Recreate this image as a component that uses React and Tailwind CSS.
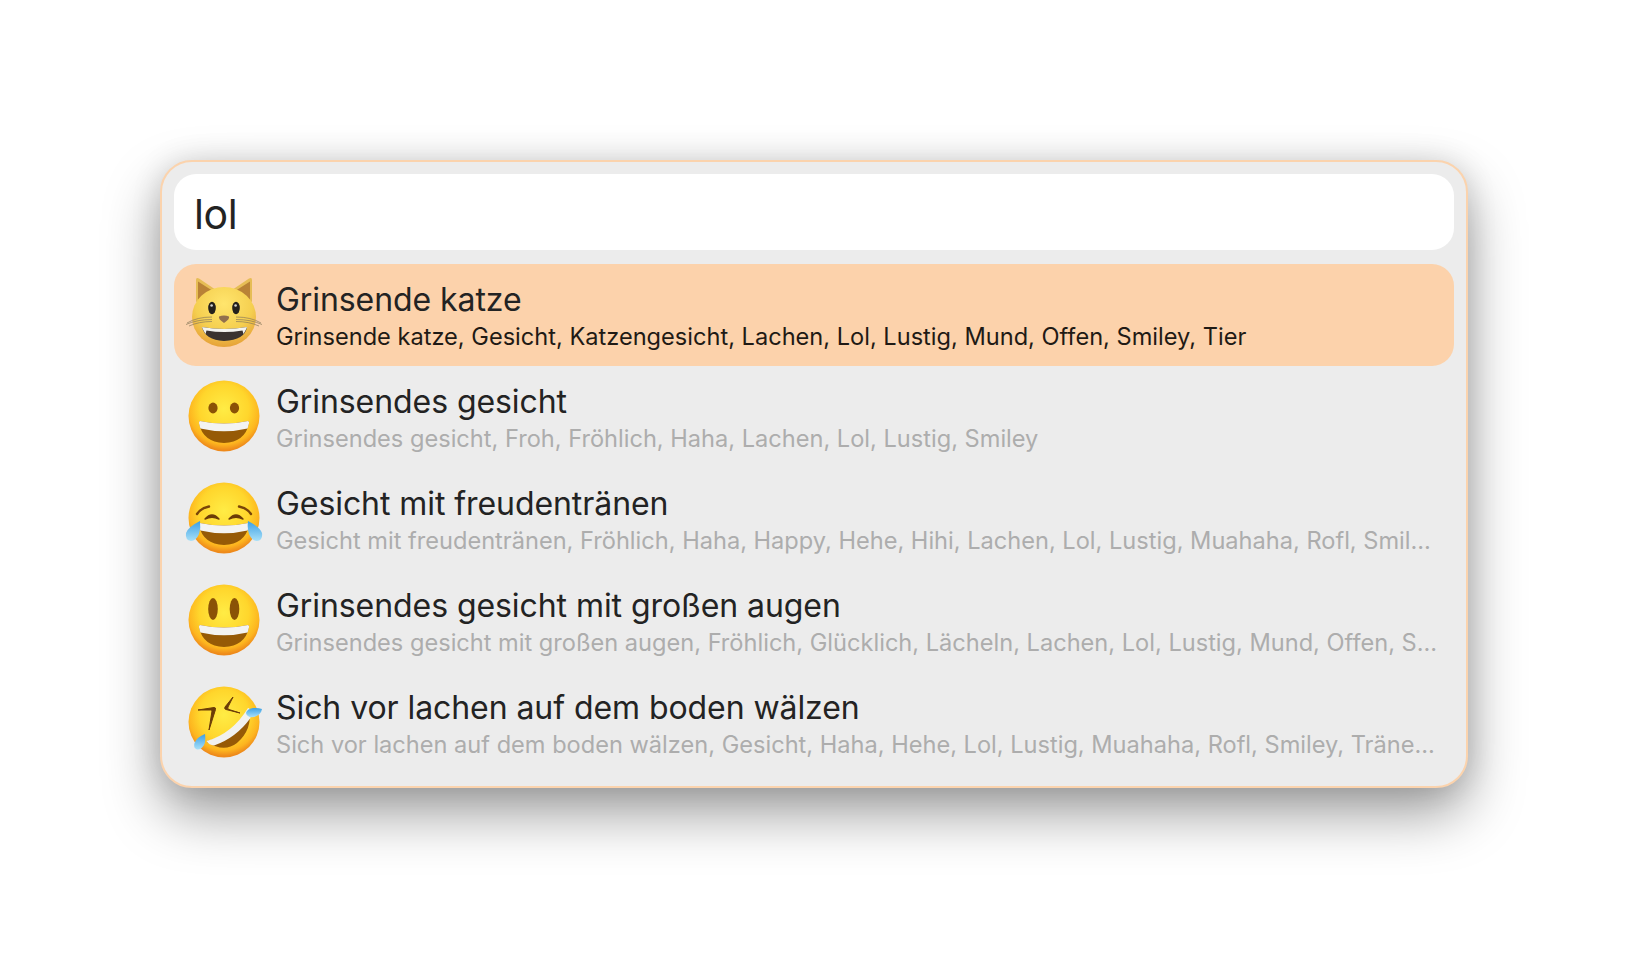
const rows = [
  { icon: "cat", title: "Grinsende katze", sub: "Grinsende katze, Gesicht, Katzengesicht, Lachen, Lol, Lustig, Mund, Offen, Smiley, Tier", active: true },
  { icon: "grin", title: "Grinsendes gesicht", sub: "Grinsendes gesicht, Froh, Fröhlich, Haha, Lachen, Lol, Lustig, Smiley" },
  { icon: "joy", title: "Gesicht mit freudentränen", sub: "Gesicht mit freudentränen, Fröhlich, Haha, Happy, Hehe, Hihi, Lachen, Lol, Lustig, Muahaha, Rofl, Smil..." },
  { icon: "smiley", title: "Grinsendes gesicht mit großen augen", sub: "Grinsendes gesicht mit großen augen, Fröhlich, Glücklich, Lächeln, Lachen, Lol, Lustig, Mund, Offen, S..." },
  { icon: "rofl", title: "Sich vor lachen auf dem boden wälzen", sub: "Sich vor lachen auf dem boden wälzen, Gesicht, Haha, Hehe, Lol, Lustig, Muahaha, Rofl, Smiley, Träne..." },
];

function Defs({ id }) {
  return (
    <defs>
      <radialGradient id={`${id}-face`} cx="50%" cy="40%" r="58%">
        <stop offset="0%" stopColor="#ffec45" />
        <stop offset="60%" stopColor="#ffd62c" />
        <stop offset="86%" stopColor="#fdb51f" />
        <stop offset="100%" stopColor="#ee8a1b" />
      </radialGradient>
      <radialGradient id={`${id}-cat`} cx="50%" cy="28%" r="72%">
        <stop offset="0%" stopColor="#ffe56d" />
        <stop offset="62%" stopColor="#f5cf50" />
        <stop offset="100%" stopColor="#e6a238" />
      </radialGradient>
      <linearGradient id={`${id}-tear`} x1="0" y1="0" x2="0" y2="1">
        <stop offset="0%" stopColor="#3b9fe4" />
        <stop offset="100%" stopColor="#a8e0f8" />
      </linearGradient>
    </defs>
  );
}

function Mouth() {
  // open smile with the white teeth strip on top
  return (
    <g>
      <path d="M16 45 Q40 50 64 45 Q65.5 45 65 47.5 Q61 66 40 67 Q19 66 15 47.5 Q14.5 45 16 45Z" fill="#965a06" />
      <path d="M16 45 Q40 50 64 45 Q65.5 45 65 47.5 L63.6 52.5 Q40 58 16.4 52.5 L15 47.5 Q14.5 45 16 45Z" fill="#f3f3f1" />
    </g>
  );
}

function Emoji({ name }) {
  const cls = "overflow-visible shrink-0 mb-[2px]";
  if (name === "cat") {
    return (
      <svg width="80" height="80" viewBox="0 0 80 80" className={cls}>
        <Defs id="cat" />
        <path d="M12 28 L12 6 Q12 3 15 4.5 L35 18Z" fill="#e6bd55" />
        <path d="M68 28 L68 6 Q68 3 65 4.5 L45 18Z" fill="#e6bd55" />
        <path d="M14 26 L14 7.5 L32 19Z" fill="#b98236" />
        <path d="M66 26 L66 7.5 L48 19Z" fill="#b98236" />
        <ellipse cx="40" cy="43" rx="32" ry="30" fill="url(#cat-cat)" />
        <ellipse cx="28" cy="34" rx="3.8" ry="6.2" fill="#24201c" />
        <ellipse cx="52" cy="34" rx="3.8" ry="6.2" fill="#24201c" />
        <circle cx="27.6" cy="31.5" r="1.3" fill="#fff" opacity=".8" />
        <circle cx="51.6" cy="31.5" r="1.3" fill="#fff" opacity=".8" />
        <path d="M35 42.5 Q40 40.5 45 42.5 Q46 45 40 49 Q34 45 35 42.5Z" fill="#92704d" />
        <g stroke="#8a7a5a" strokeWidth=".7" fill="none">
          <path d="M28 43 Q13 43 3 49" />
          <path d="M28 45.5 Q13 45.5 2 50.5" />
          <path d="M28 47.5 Q15 47.5 5 52" />
          <path d="M52 43 Q67 43 77 49" />
          <path d="M52 45.5 Q67 45.5 78 50.5" />
          <path d="M52 47.5 Q65 47.5 75 52" />
        </g>
        <path d="M18 53 Q40 57 63 53 Q61 66 40 67 Q21 66 18 53Z" fill="#3a3330" />
        <path d="M18 53 Q40 57 63 53 L62 55.5 L59.5 60 L58.5 56.5 Q40 59.5 22.5 56.5 L21.5 60 L19 55.5Z" fill="#f4f4f0" />
      </svg>
    );
  }
  if (name === "rofl") {
    return (
      <svg width="80" height="80" viewBox="0 0 80 80" className={cls}>
        <Defs id="rofl" />
        <circle cx="40" cy="40" r="35.5" fill="url(#rofl-face)" />
        <path d="M65 27 Q69 47 53 61 Q40 71 23 60 Q24 58 27 58 Q50 52 65 27Z" fill="#965a06" />
        <path d="M64 26 Q66 26 66 30 L66.5 36 Q52 56 30 63.5 Q25 63 22.5 59 Q48 52 64 26Z" fill="#f1f1ef" />
        <path d="M49 15 L41 25 Q40 27 42 27.5 L56 31 L45 27.5 Q43 26.5 44 25Z" fill="#6b3c07" stroke="#6b3c07" strokeWidth="1" strokeLinejoin="round" />
        <path d="M14 28 L30 25.5 Q32 25.5 31.5 27.5 L25 48 L28 29 Q28 28 26.5 28Z" fill="#6b3c07" stroke="#6b3c07" strokeWidth="1" strokeLinejoin="round" />
        <path d="M78 27 Q77 33 70 35 Q63 36 62 31 Q63 27 69 26 Q74 25.5 78 27Z" fill="url(#rofl-tear)" />
        <path d="M21 52 Q22 59 20 63 Q17 68 13 67.5 Q9 66 10.5 61 Q13 55 21 52Z" fill="url(#rofl-tear)" />
      </svg>
    );
  }
  return (
    <svg width="80" height="80" viewBox="0 0 80 80" className={cls}>
      <Defs id={name} />
      <circle cx="40" cy="40" r="35.5" fill={`url(#${name}-face)`} />
      {name === "grin" && (
        <>
          <ellipse cx="29" cy="32" rx="4.6" ry="5.4" fill="#8a5206" />
          <ellipse cx="50.5" cy="32" rx="4.6" ry="5.4" fill="#8a5206" />
          <Mouth />
        </>
      )}
      {name === "smiley" && (
        <>
          <ellipse cx="29" cy="29" rx="4.8" ry="11" fill="#8a5206" />
          <ellipse cx="50.5" cy="29" rx="4.8" ry="11" fill="#8a5206" />
          <Mouth />
        </>
      )}
      {name === "joy" && (
        <>
          <path d="M13 36 Q17 30 25 28.5" stroke="#7a4508" strokeWidth="2.4" fill="none" strokeLinecap="round" />
          <path d="M67 36 Q63 30 55 28.5" stroke="#7a4508" strokeWidth="2.4" fill="none" strokeLinecap="round" />
          <path d="M21 41 Q28 33 35 41 Q28 37.5 21 41Z" fill="#6b3c07" stroke="#6b3c07" strokeWidth="1.4" strokeLinejoin="round" />
          <path d="M45 41 Q52 33 59 41 Q52 37.5 45 41Z" fill="#6b3c07" stroke="#6b3c07" strokeWidth="1.4" strokeLinejoin="round" />
          <Mouth />
          <path d="M16 43 Q17 50 15 56 Q12 63 7 63 Q1 62 2 55 Q4 49 16 43Z" fill="url(#joy-tear)" />
          <path d="M64 43 Q63 50 65 56 Q68 63 73 63 Q79 62 78 55 Q76 49 64 43Z" fill="url(#joy-tear)" />
        </>
      )}
    </svg>
  );
}

export default function App() {
  return (
    <div className="min-h-[964px] bg-white pt-[160px] pl-[160px]" style={{ fontFamily: "Inter, 'Noto Sans', sans-serif" }}>
      <div className="w-[1308px] h-[628px] rounded-[32px] border-2 border-[#fbd3ad] bg-[#ececec] p-3 shadow-[0_26px_55px_rgba(0,0,0,0.38),0_0_30px_rgba(0,0,0,0.12)]">
        <div className="h-[76px] rounded-[22px] bg-white pl-5 pt-1 flex items-center text-[41px] tracking-[-0.4px] leading-none text-[#232323]">
          lol
        </div>
        <div className="mt-[14px] flex flex-col">
          {rows.map((r) => (
            <div key={r.title} className={`h-[102px] rounded-[22px] pl-[10px] pr-3 flex items-center gap-3 ${r.active ? "bg-[#fcd2ab]" : ""}`}>
              <Emoji name={r.icon} />
              <div className="min-w-0 flex-1 pt-[3px]">
                <div className="text-[32px] leading-[38px] tracking-[-0.07px] text-[#232323] truncate">{r.title}</div>
                <div className={`text-[23.6px] leading-[30px] mt-[3px] truncate ${r.active ? "text-[#1f1a15]" : "text-[#adadad]"}`}>{r.sub}</div>
              </div>
            </div>
          ))}
        </div>
      </div>
    </div>
  );
}
